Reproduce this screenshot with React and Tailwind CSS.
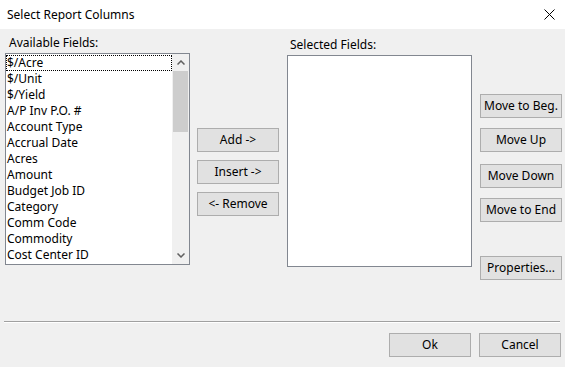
import React from "react";

const items = [
  "$/Acre",
  "$/Unit",
  "$/Yield",
  "A/P Inv P.O. #",
  "Account Type",
  "Accrual Date",
  "Acres",
  "Amount",
  "Budget Job ID",
  "Category",
  "Comm Code",
  "Commodity",
  "Cost Center ID",
];

function Btn({ children, className = "" }) {
  return (
    <div
      className={
        "flex h-[24px] w-[82px] items-center justify-center border border-[#adadad] bg-[#e1e1e1] text-[12px] text-black " +
        className
      }
    >
      {children}
    </div>
  );
}

export default function App() {
  return (
    <div
      className="flex h-[367px] w-[565px] flex-col overflow-hidden bg-[#f0f0f0] text-[12px] text-black"
      style={{ fontFamily: '"Noto Sans", "Open Sans", sans-serif' }}
    >
      {/* title bar */}
      <div className="flex h-[29px] shrink-0 items-center justify-between bg-white pl-[7px] pr-[10px]">
        <span className="text-[12px] leading-none">Select Report Columns</span>
        <svg width="11" height="11" viewBox="0 0 11 11">
          <path d="M0.5 0.5 L10.5 10.5 M10.5 0.5 L0.5 10.5" stroke="#000" strokeWidth="1" />
        </svg>
      </div>

      {/* body */}
      <div className="flex h-[289px] shrink-0">
        {/* available */}
        <div className="ml-[5px] flex w-[185px] flex-col pt-[6px]">
          <div className="h-[18px] pl-[4px] leading-[16px]">Available Fields:</div>
          <div className="flex h-[212px] border border-[#828790] bg-white">
            <div className="flex-1 overflow-hidden pt-[1px]">
              {items.map((it, i) => (
                <div
                  key={it}
                  className={
                    "h-[16px] pl-[1px] leading-[16px] whitespace-nowrap " +
                    (i === 0 ? "outline-1 outline-dotted outline-black -outline-offset-1" : "")
                  }
                >
                  {it}
                </div>
              ))}
            </div>
            <div className="flex w-[17px] flex-col bg-[#f0f0f0]">
              <div className="flex h-[17px] items-center justify-center">
                <svg width="8" height="5" viewBox="0 0 8 5">
                  <path d="M0.5 4.5 L4 1 L7.5 4.5" stroke="#606060" strokeWidth="1.5" fill="none" />
                </svg>
              </div>
              <div className="mx-[1px] h-[61px] bg-[#cdcdcd]" />
              <div className="flex-1" />
              <div className="flex h-[17px] items-center justify-center">
                <svg width="8" height="5" viewBox="0 0 8 5">
                  <path d="M0.5 0.5 L4 4 L7.5 0.5" stroke="#606060" strokeWidth="1.5" fill="none" />
                </svg>
              </div>
            </div>
          </div>
        </div>

        {/* middle buttons */}
        <div className="ml-[7px] flex flex-col gap-[8px] pt-[99px]">
          <Btn>Add -&gt;</Btn>
          <Btn>Insert -&gt;</Btn>
          <Btn>&lt;- Remove</Btn>
        </div>

        {/* selected */}
        <div className="ml-[8px] flex w-[185px] flex-col pt-[8px]">
          <div className="h-[18px] pl-[3px] leading-[16px]">Selected Fields:</div>
          <div className="h-[212px] border border-[#828790] bg-white" />
        </div>

        {/* right buttons */}
        <div className="ml-[8px] flex flex-col pt-[65px]">
          <Btn>Move to Beg.</Btn>
          <Btn className="mt-[10px]">Move Up</Btn>
          <Btn className="mt-[12px]">Move Down</Btn>
          <Btn className="mt-[10px]">Move to End</Btn>
          <Btn className="mt-[34px]">Properties...</Btn>
        </div>
      </div>

      {/* separator */}
      <div className="ml-[4px] mt-[3px] h-[2px] w-[556px] border-t border-[#a0a0a0] border-b border-b-white" />

      {/* bottom buttons */}
      <div className="mt-[10px] flex justify-end gap-[8px] pr-[4px]">
        <Btn>Ok</Btn>
        <Btn>Cancel</Btn>
      </div>
    </div>
  );
}
